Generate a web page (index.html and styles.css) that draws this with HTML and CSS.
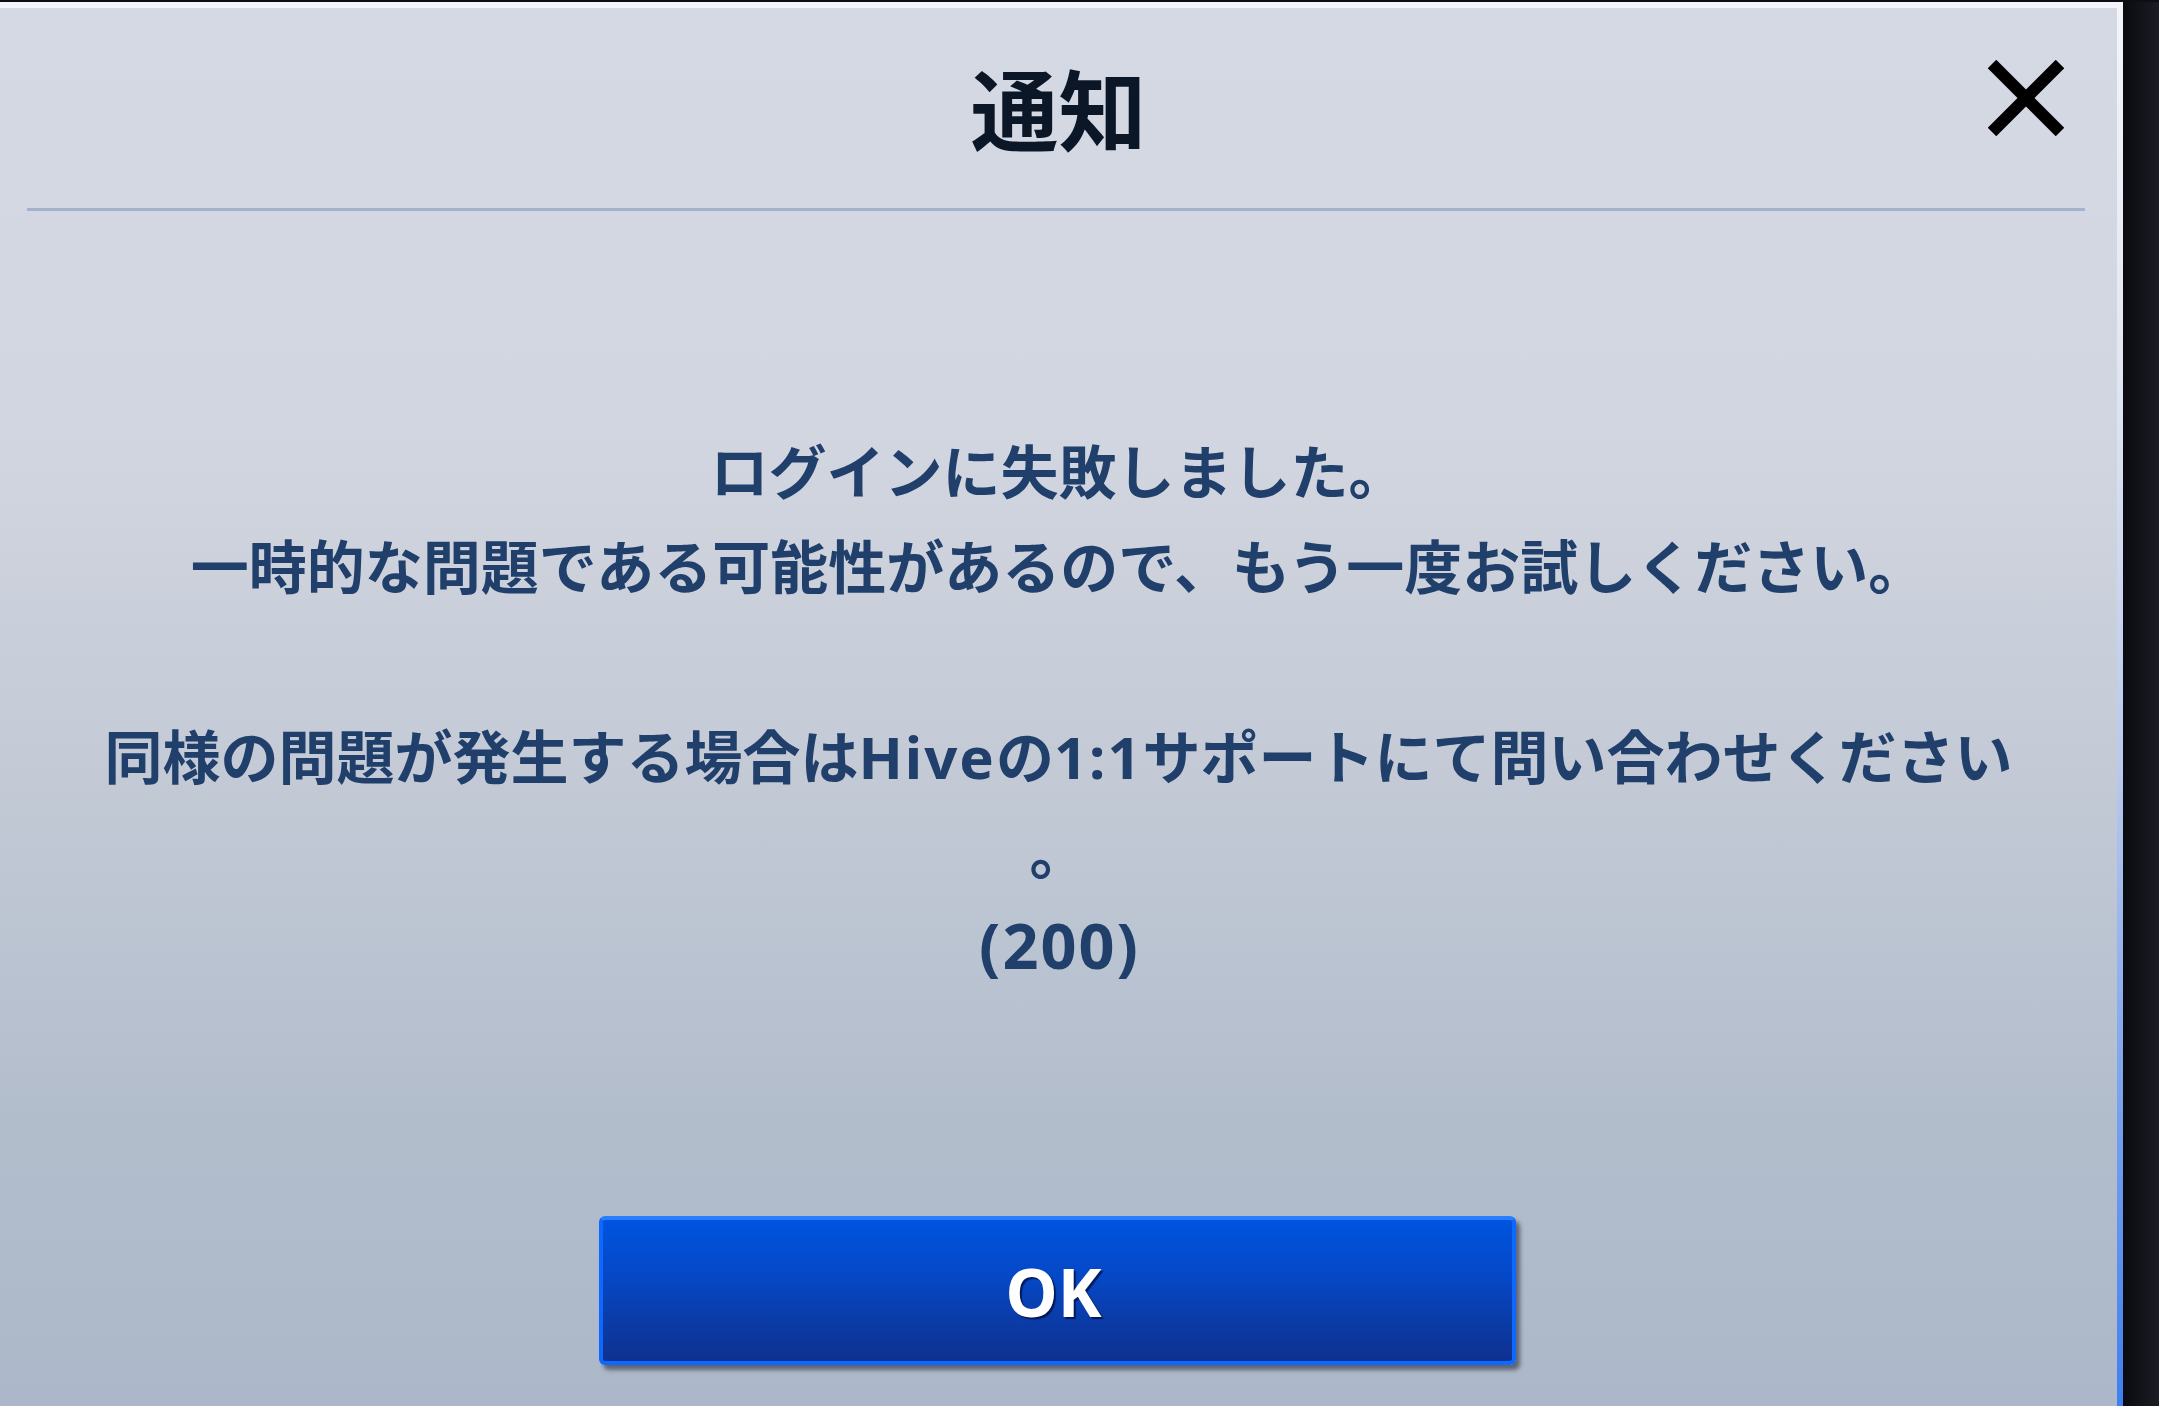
FILE: index.html
```html
<!DOCTYPE html>
<html lang="ja">
<head>
  <meta charset="UTF-8">
  <title>通知</title>
  <link rel="stylesheet" href="styles.css">
</head>
<body>
  <div class="screen">
    <div class="frame">
      <div class="dialog">
        <div class="dialog-header">
          <span></span>
          <h1 class="dialog-title">通知</h1>
          <button class="close-btn" aria-label="閉じる">
            <svg width="76" height="76" viewBox="0 0 76 76">
              <line x1="4" y1="4" x2="72" y2="72" stroke="#000" stroke-width="12" />
              <line x1="72" y1="4" x2="4" y2="72" stroke="#000" stroke-width="12" />
            </svg>
          </button>
        </div>
        <hr class="divider">
        <div class="message">
          <p>ログインに失敗しました。</p>
          <p>一時的な問題である可能性があるので、もう一度お試しください。</p>
          <p class="blank">&nbsp;</p>
          <p>同様の問題が発生する場合は<span class="latin">Hive</span>の<span class="latin">1:1</span>サポートにて問い合わせください</p>
          <p>。</p>
          <p><span class="code">(200)</span></p>
        </div>
        <div class="actions">
          <button class="ok-btn">OK</button>
        </div>
      </div>
    </div>
    <div class="backdrop"></div>
  </div>
</body>
</html>
```

FILE: styles.css
```css
html, body {
  margin: 0;
  padding: 0;
  height: 100%;
  overflow: hidden;
}
body {
  background: #0d0e13;
  font-family: "Noto Sans", "Noto Sans CJK JP", sans-serif;
}
.screen {
  display: flex;
  height: 1406px;
  padding-top: 2px;
  box-sizing: border-box;
}
.frame {
  width: 2123px;
  flex: none;
  padding: 6px 6px 0 0;
  box-sizing: border-box;
  background: linear-gradient(to bottom, #f3f5fa 0%, #e2e7f2 25%, #b9c8ec 55%, #3e7ff0 100%);
}
.backdrop {
  flex: 1;
  background: linear-gradient(to right, #0a0b0f, #1b1c24);
}
.dialog {
  height: 100%;
  background: linear-gradient(to bottom, #d5d9e3 0%, #d2d6e0 30%, #c3cad6 55%, #b2bdcc 80%, #acb8c9 100%);
  display: flex;
  flex-direction: column;
}
.dialog-header {
  display: grid;
  grid-template-columns: 1fr auto 1fr;
  align-items: center;
  height: 200px;
}
.dialog-title {
  margin: -4px 0 0 0;
  font-family: "Noto Sans CJK JP", sans-serif;
  font-weight: 700;
  font-size: 88px;
  line-height: 1;
  color: #0b1627;
}
.close-btn {
  justify-self: end;
  align-self: start;
  margin: 52px 53px 0 0;
  padding: 0;
  border: none;
  background: none;
  width: 76px;
  height: 76px;
  cursor: pointer;
}
.close-btn svg {
  display: block;
}
.divider {
  margin: 0 32px 0 27px;
  border: none;
  height: 3px;
  background: #a3b3cf;
}
.message {
  margin-top: 213px;
  text-align: center;
  color: #213f6b;
  font-weight: 700;
  font-size: 58px;
  line-height: 95px;
}
.message p {
  margin: 0;
  height: 95px;
  white-space: nowrap;
}
.latin {
  letter-spacing: 2px;
}
.code {
  font-size: 63px;
  line-height: 1;
  letter-spacing: 2px;
  margin-right: -2px;
}
.actions {
  display: flex;
  justify-content: center;
  margin-top: 222px;
}
.ok-btn {
  width: 917px;
  height: 149px;
  margin-left: -2px;
  padding: 0 8px 0 0;
  border: 4px solid #0c68ff;
  border-top-color: #2a7dff;
  border-radius: 6px;
  background: linear-gradient(to bottom, #0054df 0%, #0548c6 40%, #0b3aa4 75%, #0f318f 100%);
  box-shadow: 4px 5px 4px rgba(40, 44, 60, 0.6);
  color: #fff;
  font-family: "Noto Sans", sans-serif;
  font-weight: 700;
  font-size: 66px;
  text-shadow: 2px 2px 1px rgba(0, 10, 50, 0.7);
  cursor: pointer;
}
```
